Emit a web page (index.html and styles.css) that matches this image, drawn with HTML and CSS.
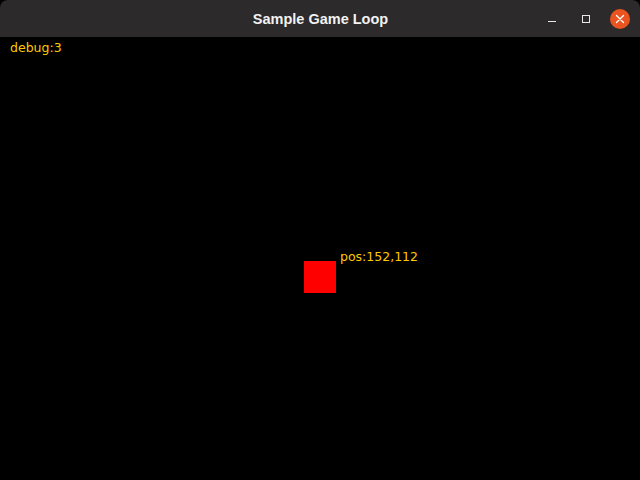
FILE: index.html
```html
<!DOCTYPE html>
<html>
<head>
<meta charset="utf-8">
<title>Sample Game Loop</title>
<link rel="stylesheet" href="styles.css">
</head>
<body>
<div class="window">
  <header class="titlebar">
    <div class="spacer"></div>
    <div class="title">Sample Game Loop</div>
    <div class="controls">
      <div class="btn min"><span class="min-line"></span></div>
      <div class="btn max"><span class="max-box"></span></div>
      <div class="btn close">
        <svg width="20" height="20" viewBox="0 0 20 20"><circle cx="10" cy="10" r="10" fill="#e95420"/><path d="M6.5 6.5 L13.5 13.5 M13.5 6.5 L6.5 13.5" stroke="#ffffff" stroke-width="1.4" stroke-linecap="round"/></svg>
      </div>
    </div>
  </header>
  <main class="canvas">
    <div class="label debug">debug:3</div>
    <div class="player"></div>
    <div class="label pos">pos:152,112</div>
  </main>
</div>
</body>
</html>
```
FILE: styles.css
```css
html, body {
  margin: 0;
  padding: 0;
  background: #000;
  width: 640px;
  height: 480px;
  overflow: hidden;
}
.window {
  display: flex;
  flex-direction: column;
  width: 640px;
  height: 480px;
}
.titlebar {
  height: 37px;
  flex: none;
  background: #2c2a2a;
  display: grid;
  grid-template-columns: 1fr auto 1fr;
  align-items: center;
  border-radius: 8px 8px 0 0;
}
.title {
  font-family: "Liberation Sans", Arial, sans-serif;
  font-weight: bold;
  font-size: 14.5px;
  color: #f2f2f2;
  padding-left: 1px;
}
.controls {
  display: flex;
  justify-content: flex-end;
  align-items: center;
  gap: 14px;
  padding-right: 10px;
}
.btn {
  width: 20px;
  height: 20px;
  display: flex;
  align-items: center;
  justify-content: center;
  position: relative;
}
.min-line {
  display: block;
  width: 8px;
  height: 1px;
  background: #e8e8e8;
  margin-top: 6px;
}
.max-box {
  display: block;
  width: 6px;
  height: 6px;
  border: 1px solid #e8e8e8;
  margin-top: 1px;
}
.close svg {
  display: block;
}
.canvas {
  flex: 1;
  position: relative;
  background: #000;
}
.label {
  position: absolute;
  font-family: "DejaVu Sans", sans-serif;
  font-size: 12.5px;
  line-height: 1;
  color: #ffc800;
  white-space: nowrap;
}
.debug {
  left: 10px;
  top: 4.5px;
}
.pos {
  left: 340px;
  top: 213.5px;
}
.player {
  position: absolute;
  left: 304px;
  top: 224px;
  width: 32px;
  height: 32px;
  background: #ff0000;
}
```
